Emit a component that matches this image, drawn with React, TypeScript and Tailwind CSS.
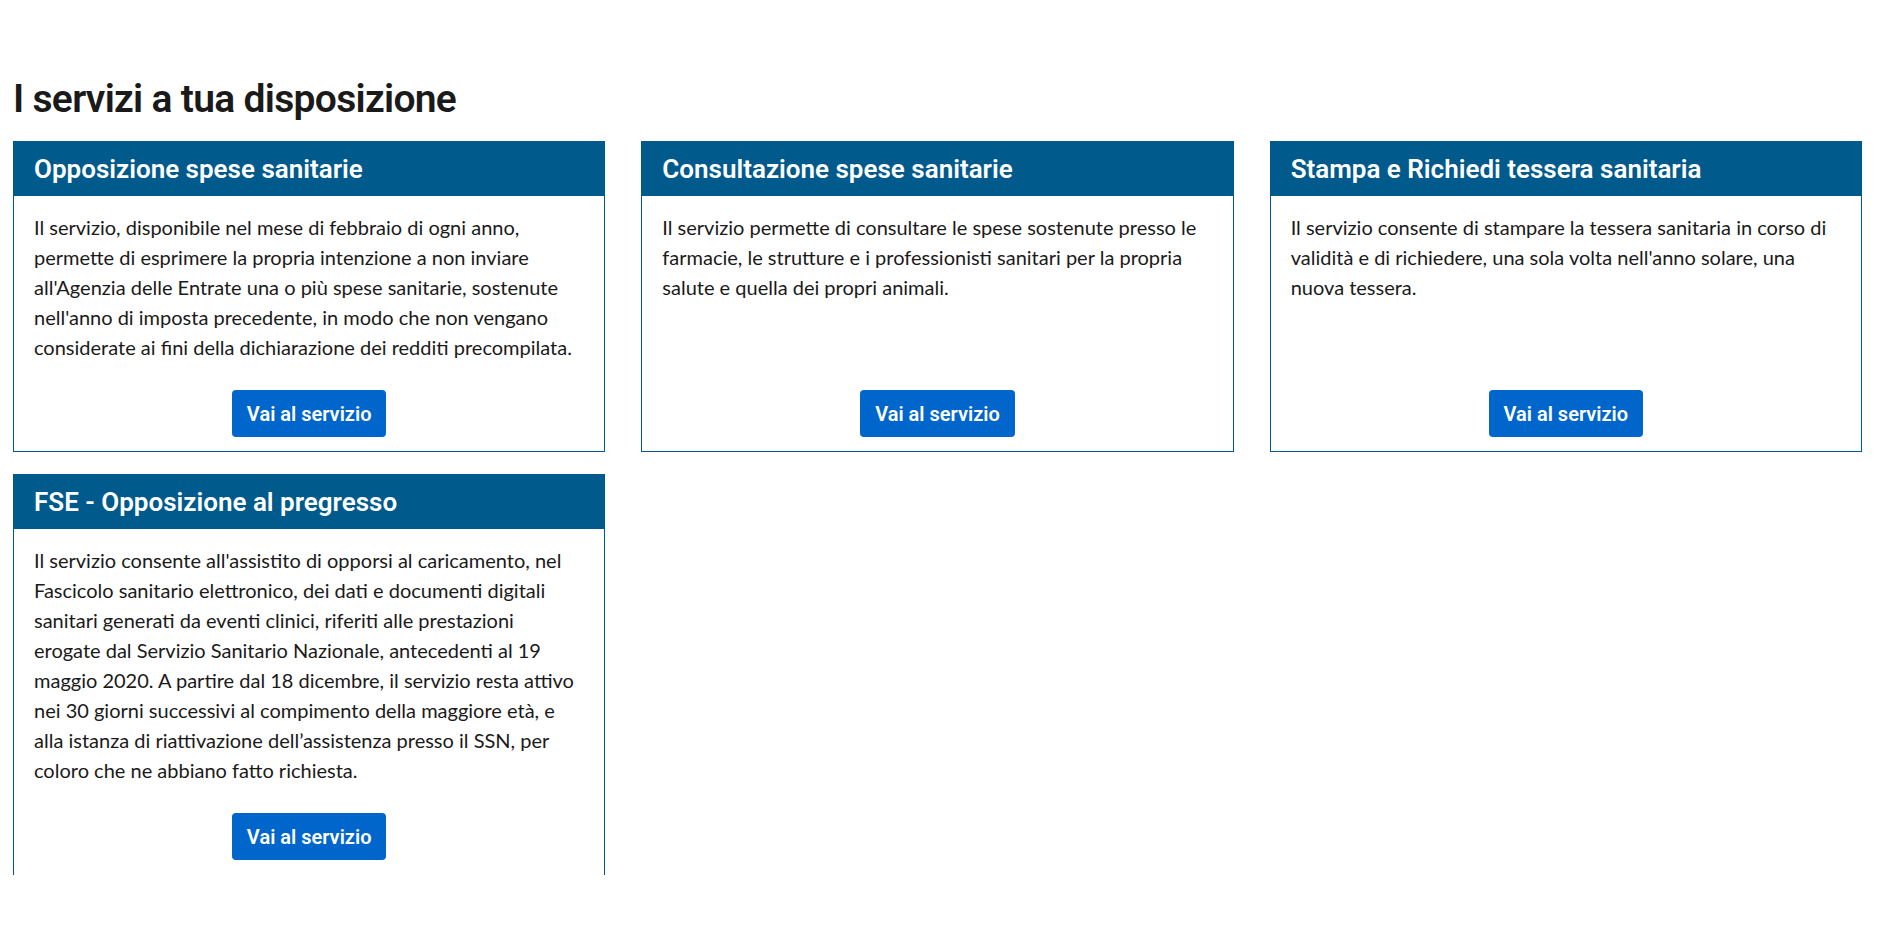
import React from 'react';

interface Service {
  id: string;
  title: string;
  lines: string[];
  noBottomBorder?: boolean;
}

const services: Service[] = [
  {
    id: 'opposizione',
    title: 'Opposizione spese sanitarie',
    lines: [
      'Il servizio, disponibile nel mese di febbraio di ogni anno,',
      'permette di esprimere la propria intenzione a non inviare',
      "all'Agenzia delle Entrate una o più spese sanitarie, sostenute",
      "nell'anno di imposta precedente, in modo che non vengano",
      'considerate ai fini della dichiarazione dei redditi precompilata.',
    ],
  },
  {
    id: 'consultazione',
    title: 'Consultazione spese sanitarie',
    lines: [
      'Il servizio permette di consultare le spese sostenute presso le',
      'farmacie, le strutture e i professionisti sanitari per la propria',
      'salute e quella dei propri animali.',
    ],
  },
  {
    id: 'tessera',
    title: 'Stampa e Richiedi tessera sanitaria',
    lines: [
      'Il servizio consente di stampare la tessera sanitaria in corso di',
      "validità e di richiedere, una sola volta nell'anno solare, una",
      'nuova tessera.',
    ],
  },
  {
    id: 'fse',
    title: 'FSE - Opposizione al pregresso',
    lines: [
      "Il servizio consente all'assistito di opporsi al caricamento, nel",
      'Fascicolo sanitario elettronico, dei dati e documenti digitali',
      'sanitari generati da eventi clinici, riferiti alle prestazioni',
      'erogate dal Servizio Sanitario Nazionale, antecedenti al 19',
      'maggio 2020. A partire dal 18 dicembre, il servizio resta attivo',
      'nei 30 giorni successivi al compimento della maggiore età, e',
      'alla istanza di riattivazione dell’assistenza presso il SSN, per',
      'coloro che ne abbiano fatto richiesta.',
    ],
    noBottomBorder: true,
  },
];

const ServiceCard: React.FC<{ service: Service }> = ({ service }) => (
  <div
    className={`flex flex-col border border-[#005a8c] bg-white ${service.noBottomBorder ? 'border-b-0 pb-px' : ''}`}
  >
    <div className="h-[54px] bg-[#005a8c] px-[20px] flex items-center">
      <h3 className="text-white text-[26px] leading-[30px] font-semibold font-['Roboto',sans-serif]">
        {service.title}
      </h3>
    </div>
    <div className="flex flex-1 flex-col px-[20px] pt-[16px] pb-[14px]">
      <p className="text-[20px] leading-[30px] text-[#1a1a1a] font-['Lato',sans-serif]">
        {service.lines.map((line, i) => (
          <span key={i} className="block whitespace-nowrap">
            {line}
          </span>
        ))}
      </p>
      <div className="mt-auto pt-[28px] flex justify-center">
        <button className="h-[47px] rounded-[4px] bg-[#0066cc] px-[15px] text-[20px] font-semibold text-white font-['Roboto',sans-serif]">
          Vai al servizio
        </button>
      </div>
    </div>
  </div>
);

export default function App() {
  return (
    <div className="min-h-screen bg-white pt-[75px] pl-[13px]">
      <h2 className="mb-[18px] text-[39px] leading-[48px] font-semibold tracking-[-0.7px] text-[#1a1a1a] font-['Roboto',sans-serif]">
        I servizi a tua disposizione
      </h2>
      <div className="grid w-[1849px] grid-cols-3 gap-x-[36px] gap-y-[22px]">
        {services.map(s => (
          <ServiceCard key={s.id} service={s} />
        ))}
      </div>
    </div>
  );
}
